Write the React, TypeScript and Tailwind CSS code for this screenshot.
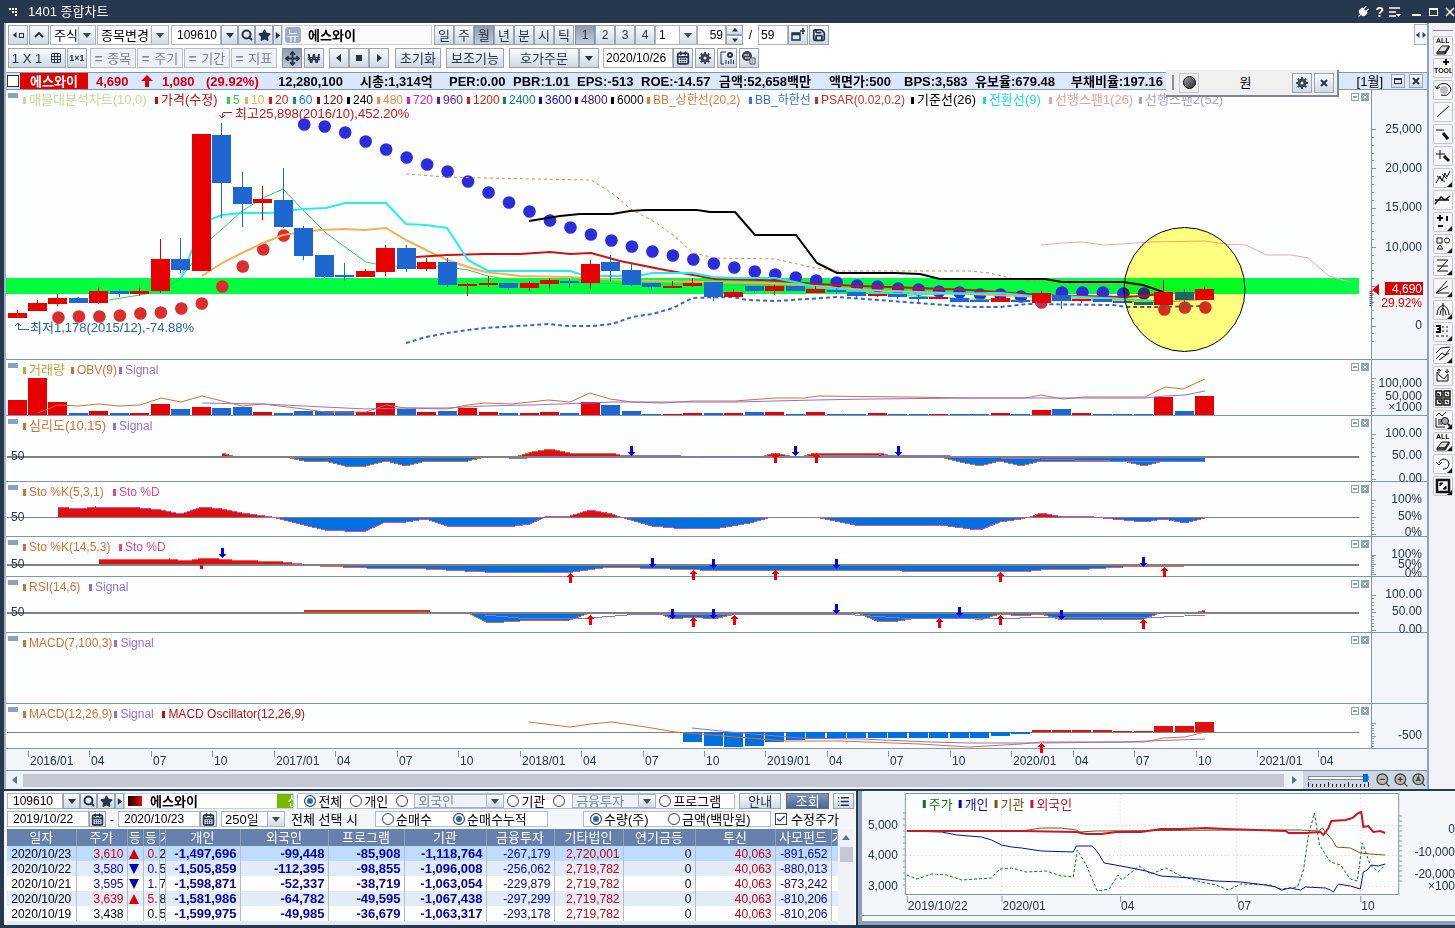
import type { ReactNode } from "react";
import { Search, Star, Settings, Save, CalendarDays, Move, Plug, Grid3x3, List, ZoomIn, ZoomOut, Check } from "lucide-react";
import clsx from "clsx";

type Pt = [number, number];
type Candle = [top: number, bottom: number, high: number, low: number, up: 0 | 1];

const RED = "#e60000";
const BLUE = "#1e66d0";
const AREA_BLUE = "#0070e0";
const ORANGE = "#d07038";
const PURPLE = "#9070d8";
const LINE = "#8294b4";

const font = "font-['Liberation_Sans','Noto_Sans_CJK_KR',sans-serif]";
const btn = "flex items-center justify-center border border-[#98a4b4] bg-linear-to-b from-[#fbfcfd] to-[#cfd8e3] text-[#26324a]";
const pressed = "flex items-center justify-center border border-[#8290a4] bg-linear-to-b from-[#8d9bb0] to-[#c3ccd9] text-[#26324a]";

const barX = (i: number) => 17.5 + 20.48 * i;
const poly = (pts: Pt[]) => pts.map(p => p.join(",")).join(" ");
const isWide = (ch: string) => ch.charCodeAt(0) > 0x1100;
const cells = (s: string) => [...s].reduce((n, ch) => n + (isWide(ch) ? 2 : 1), 0);

const candles: Candle[] = [
  [313, 318, 310, 318, 1], [303, 311, 300, 311, 1], [298, 304, 294, 306, 1], [298, 303, 297, 303, 0],
  [291, 303, 287, 304, 1], [291, 294, 289, 297, 0], [291, 294, 287, 296, 1], [259, 291, 239, 293, 1],
  [259, 270, 238, 273, 0], [134, 271, 134, 271, 1], [135, 183, 123, 218, 0], [187, 204, 172, 227, 0],
  [199, 203, 186, 220, 1], [200, 227, 168, 228, 0], [228, 256, 226, 260, 0], [255, 277, 255, 278, 0],
  [275, 277, 263, 281, 0], [271, 277, 269, 277, 1], [248, 272, 245, 276, 1], [248, 269, 245, 272, 0],
  [262, 269, 258, 271, 1], [262, 285, 258, 287, 0], [284, 286, 283, 296, 1], [283, 285, 276, 287, 1],
  [283, 288, 283, 290, 0], [283, 288, 281, 291, 1], [280, 284, 278, 289, 1], [281, 283, 279, 288, 0],
  [264, 283, 260, 289, 1], [262, 271, 255, 281, 0], [270, 285, 262, 286, 0], [283, 287, 283, 290, 0],
  [286, 288, 281, 288, 1], [283, 286, 278, 287, 1], [282, 297, 282, 301, 0], [292, 297, 289, 297, 1],
  [286, 291, 286, 293, 0], [286, 291, 285, 295, 1], [286, 291, 286, 291, 0], [289, 293, 286, 293, 1],
  [290, 292, 288, 294, 0], [292, 296, 292, 299, 0], [294, 296, 294, 297, 1], [294, 297, 294, 299, 0],
  [297, 299, 295, 303, 0], [297, 299, 297, 299, 1], [298, 302, 298, 302, 0], [300, 302, 300, 302, 0],
  [298, 302, 298, 302, 1], [300, 302, 300, 302, 0], [293, 303, 291, 303, 1], [295, 301, 295, 309, 0],
  [299, 301, 299, 303, 1], [299, 302, 299, 302, 0], [301, 303, 301, 303, 0], [302, 305, 302, 305, 0],
  [292, 305, 280, 305, 1], [292, 300, 289, 303, 0], [289, 300, 287, 300, 1],
];

const volumes = [
  400, 378, 402, 413, 411, 413, 413, 404, 409, 407, 408, 407, 412, 413, 411, 411, 411, 412, 403, 409,
  412, 411, 408, 412, 413, 413, 412, 413, 402, 405, 411, 414, 414, 413, 413, 413, 412, 412, 414, 412,
  414, 414, 413, 414, 414, 414, 414, 414, 413, 414, 410, 409, 413, 414, 414, 414, 397, 411, 396,
];

// parabolic SAR, first value belongs to bar 2
const psar = [
  317, 316, 316, 315, 313, 312, 308, 303, 286, 266, 249, 235, 124, 126, 132, 141, 149, 157, 164, 171,
  181, 192, 202, 211, 220, 227, 234, 240, 246, 251, 255, 259, 263, 267, 271, 274, 277, 280, 282, 285,
  286, 288, 289, 291, 292, 294, 294, 296, 302, 292, 292, 292, 293, 293, 309, 307, 307,
];
const psarUp = (bar: number) => bar < 14 || bar === 50 || bar > 55;

const cyan: Pt[] = [[181, 278], [192, 250], [211, 219], [222, 215], [242, 213], [270, 213], [283, 211], [304, 209], [326, 208], [345, 203], [386, 203], [406, 224], [426, 225], [447, 228], [468, 260], [488, 271], [570, 271], [580, 274], [603, 276], [638, 276], [652, 273], [693, 273], [713, 277], [733, 278], [775, 278], [795, 282], [815, 287], [837, 289], [878, 293], [918, 294], [1000, 293], [1030, 296], [1063, 296], [1103, 298], [1143, 300], [1160, 302]];
const orange: Pt[] = [[202, 276], [222, 263], [242, 253], [263, 243], [283, 235], [304, 232], [320, 230], [345, 229], [365, 230], [386, 228], [406, 240], [426, 250], [447, 260], [468, 267], [485, 272], [520, 276], [568, 277], [588, 278], [622, 280], [652, 281], [705, 282], [768, 283], [808, 285], [837, 288], [868, 290], [970, 294], [1041, 297], [1123, 300], [1164, 302], [1205, 299]];
const green: Pt[] = [[109, 300], [140, 295], [161, 291], [181, 278], [202, 250], [211, 239], [242, 211], [263, 198], [283, 189], [304, 211], [326, 233], [345, 247], [366, 262], [386, 266], [447, 267], [468, 270], [488, 276], [530, 283], [570, 283], [785, 286], [837, 292], [970, 299], [1041, 301], [1100, 300], [1164, 303]];
const red: Pt[] = [[416, 257], [447, 255], [485, 254], [520, 254], [550, 252], [570, 254], [591, 253], [620, 261], [665, 270], [693, 275], [715, 279], [760, 280], [795, 282], [815, 284], [860, 286], [918, 288], [970, 290], [1041, 295], [1082, 296], [1123, 297], [1143, 296], [1160, 294]];
const black: Pt[] = [[529, 221], [560, 216], [580, 214], [612, 214], [630, 211], [645, 210], [697, 210], [710, 212], [735, 212], [755, 235], [796, 235], [817, 263], [837, 273], [895, 273], [920, 274], [940, 279], [1045, 279], [1062, 282], [1123, 282], [1143, 285], [1163, 292]];
const bbUpper: Pt[] = [[406, 174], [447, 177], [485, 178], [591, 180], [612, 193], [632, 210], [655, 222], [673, 235], [693, 253], [715, 258], [775, 259], [815, 268], [837, 271], [970, 271], [990, 273], [1010, 278], [1045, 283], [1105, 285], [1145, 286], [1185, 290], [1205, 289]];
const bbLower: Pt[] = [[406, 343], [426, 337], [447, 333], [468, 330], [485, 328], [518, 326], [548, 324], [567, 326], [593, 326], [612, 324], [632, 317], [652, 314], [673, 308], [692, 298], [732, 297], [748, 300], [775, 301], [808, 299], [838, 297], [878, 300], [918, 303], [970, 307], [1000, 307], [1027, 304], [1113, 305], [1127, 307], [1157, 307], [1205, 306]];
const span1: Pt[] = [[1041, 245], [1062, 243], [1083, 242], [1103, 245], [1123, 244], [1150, 242], [1205, 241], [1225, 244], [1246, 245], [1267, 255], [1291, 255], [1308, 258], [1329, 276], [1350, 282]];

const obv: Pt[] = [[38, 413], [58, 405], [78, 406], [99, 404], [119, 406], [140, 405], [161, 398], [181, 402], [202, 396], [222, 401], [242, 406], [263, 404], [304, 409], [325, 412], [366, 412], [386, 405], [406, 408], [447, 409], [468, 405], [485, 403], [512, 404], [548, 400], [570, 402], [590, 393], [610, 399], [632, 402], [662, 403], [693, 401], [735, 401], [775, 398], [805, 398], [818, 396], [908, 397], [970, 398], [1025, 398], [1041, 395], [1063, 399], [1083, 397], [1145, 397], [1165, 387], [1183, 389], [1205, 379]];
const obvSignal: Pt[] = [[202, 403], [263, 404], [304, 406], [345, 408], [366, 409], [406, 408], [447, 408], [485, 406], [530, 405], [590, 403], [612, 402], [735, 402], [775, 401], [815, 400], [870, 399], [970, 398], [1145, 398], [1165, 396], [1185, 395], [1205, 391]];

const psy: Pt[] = [[222, 453], [236, 457], [285, 457], [304, 461], [325, 461], [345, 466], [366, 466], [386, 461], [406, 466], [426, 461], [468, 461], [485, 457], [515, 457], [532, 452], [550, 449], [570, 453], [612, 453], [628, 457], [760, 457], [775, 453], [795, 457], [800, 457], [815, 453], [880, 453], [895, 457], [940, 457], [960, 462], [980, 466], [1000, 461], [1021, 466], [1041, 461], [1123, 461], [1144, 466], [1164, 461], [1205, 461]];
const psySignal: Pt[] = [[509, 459], [545, 457], [612, 457], [630, 455], [662, 455], [700, 457], [780, 457], [815, 456], [880, 455], [950, 456], [960, 457], [1040, 459], [1110, 461], [1205, 461]];
const stoFast: Pt[] = [[58, 507], [80, 509], [95, 507], [140, 508], [161, 510], [181, 514], [202, 507], [222, 509], [242, 513], [272, 517], [304, 525], [325, 530], [345, 531], [366, 531], [385, 522], [406, 522], [426, 519], [447, 526], [515, 526], [530, 524], [545, 517], [570, 516], [590, 510], [612, 514], [620, 517], [652, 526], [673, 528], [714, 529], [750, 523], [772, 517], [815, 517], [855, 525], [890, 526], [940, 525], [970, 529], [980, 530], [1000, 522], [1021, 519], [1030, 517], [1041, 513], [1058, 516], [1085, 516], [1103, 518], [1144, 522], [1164, 519], [1185, 523], [1205, 518]];
const stoSlow: Pt[] = [[99, 560], [170, 559], [185, 561], [205, 558], [232, 560], [283, 562], [320, 566], [366, 568], [426, 569], [485, 572], [573, 572], [595, 569], [612, 567], [640, 568], [700, 570], [840, 570], [900, 571], [1021, 572], [1041, 570], [1090, 569], [1123, 567], [1185, 566], [1205, 565]];
const rsi: Pt[] = [[304, 611], [386, 611], [430, 612], [468, 613], [488, 623], [520, 621], [570, 620], [590, 613], [660, 614], [673, 619], [693, 617], [713, 619], [732, 615], [740, 613], [860, 614], [877, 621], [898, 621], [918, 618], [970, 618], [980, 620], [1000, 614], [1021, 616], [1041, 614], [1062, 620], [1103, 619], [1144, 619], [1160, 613], [1195, 613], [1205, 610]];
const rsiSignal: Pt[] = [[485, 615], [530, 619], [590, 618], [640, 614], [740, 615], [840, 614], [900, 618], [980, 619], [1060, 617], [1144, 618], [1205, 615]];
const macd: Pt[] = [[529, 722], [570, 727], [590, 724], [612, 722], [652, 728], [675, 732], [785, 741], [840, 741], [920, 744], [970, 747], [1021, 744], [1041, 742], [1144, 742], [1164, 738], [1185, 737], [1205, 732]];
const macdSignal: Pt[] = [[692, 728], [730, 732], [800, 738], [860, 739], [930, 742], [970, 743], [1041, 743], [1123, 742], [1205, 739]];
// oscillator, first value belongs to bar 33
const oscillator = [742, 746, 747, 746, 742, 740, 739, 738, 738, 738, 738, 738, 738, 738, 738, 736, 734, 730, 730, 730, 730, 731, 731, 726, 726, 722];

function Legend({ items }: { items: [string, string][] }) {
  return (
    <div className="absolute left-[17px] top-[2px] flex h-4 items-center whitespace-nowrap">
      {items.map(([label, color]) => (
        <span key={label} className="flex shrink-0 items-center gap-[3px] pr-[2px]" style={{ color, minWidth: cells(label) * 6 + 12 }}>
          <span className="h-[7px] w-[3px] shrink-0" style={{ background: color }} />
          <span className={[...label].some(isWide) && !/[A-Z]/.test(label) ? "text-[13px] leading-4" : "text-xs leading-4"}>{label}</span>
        </span>
      ))}
    </div>
  );
}

function Line({ pts, color, w = 1, dash }: { pts: Pt[]; color: string; w?: number; dash?: string }) {
  return <polyline points={poly(pts)} fill="none" stroke={color} strokeWidth={w} strokeDasharray={dash} />;
}

function BaseLine({ y, label = true, w = 2 }: { y: number; label?: boolean; w?: number }) {
  return (
    <>
      <line x1={7} x2={1359} y1={y} y2={y} stroke="#808080" strokeWidth={w} />
      {label && <text x={11} y={y + 3} fontSize={12} fill="#26324a">50</text>}
    </>
  );
}

function Area({ pts, base, edge }: { pts: Pt[]; base: number; edge: string }) {
  const first = pts[0][0];
  const last = pts[pts.length - 1][0];
  const above = pts.map(([x, y]): Pt => [x, Math.min(y, base)]);
  const below = pts.map(([x, y]): Pt => [x, Math.max(y, base)]);
  return (
    <>
      <polygon points={poly([[first, base], ...above, [last, base]])} fill="#e01010" />
      <polygon points={poly([[first, base], ...below, [last, base]])} fill={AREA_BLUE} />
      <Line pts={pts} color={edge} />
    </>
  );
}

function Arrows({ up = [], down = [] }: { up?: Pt[]; down?: Pt[] }) {
  return (
    <>
      {up.map(([x, y]) => (
        <path key={x} d={`M${x} ${y - 5}l4 4h-2v6h-3v-6h-3z`} fill="#f00000" />
      ))}
      {down.map(([x, y]) => (
        <path key={x} d={`M${x} ${y + 5}l4 -4h-2v-6h-3v6h-3z`} fill="#0000e0" />
      ))}
    </>
  );
}

interface PanelProps {
  top: number;
  height: number;
  h: string;
  legend: [string, string][];
  axis?: [string, number][];
  step?: number;
  from?: number;
  to?: number;
  axisExtra?: ReactNode;
  children?: ReactNode;
}

function Panel({ top, height, h, legend, axis = [], step, from = 0, to = 0, axisExtra, children }: PanelProps) {
  const ticks: number[] = [];
  if (step) for (let y = from; y <= to; y += step) ticks.push(y);
  return (
    <section className={clsx("flex", h)}>
      <div className="relative min-w-0 flex-1">
        <svg className="absolute inset-0 size-full overflow-visible" viewBox={`6 ${top} 1366 ${height}`} preserveAspectRatio="none" shapeRendering="crispEdges">
          <line x1={6} x2={1372} y1={top + height - 0.5} y2={top + height - 0.5} stroke={LINE} />
          {children}
        </svg>
        <div className="absolute left-[2px] top-[3px] h-[5px] w-[10px] bg-[#8fa0bf]" />
        <Legend items={legend} />
        <div className="absolute right-[3px] top-[3px] flex gap-[2px]">
          <button aria-label="최대화" className="flex size-2 items-center justify-center border border-[#8fa0bf] bg-white">
            <span className="h-[2px] w-1 bg-[#8fa0bf]" />
          </button>
          <button aria-label="닫기" className="size-2 bg-[#8fa0bf]">
            <svg viewBox="0 0 8 8" className="size-2"><path d="M2 2l4 4M6 2l-4 4" stroke="#fff" /></svg>
          </button>
        </div>
      </div>
      <svg className="w-[55px] shrink-0 overflow-visible bg-[#f3f6f9]" viewBox={`1372 ${top} 55 ${height}`}>
        <g shapeRendering="crispEdges">
          <line x1={1371.5} x2={1371.5} y1={top} y2={top + height} stroke={LINE} />
          <line x1={1372} x2={1427} y1={top + height - 0.5} y2={top + height - 0.5} stroke={LINE} />
          {ticks.map((y, i) => <line key={y} x1={1372} x2={i % 5 ? 1374 : 1376} y1={y} y2={y} stroke={LINE} />)}
        </g>
        {axis.map(([label, y]) => (
          <text key={label} x={1422} y={y + 4} fontSize={12} textAnchor="end" fill="#26324a">{label}</text>
        ))}
        {axisExtra}
      </svg>
    </section>
  );
}

function Caret({ dir = "down", className = "size-2" }: { dir?: "down" | "up" | "left" | "right"; className?: string }) {
  const d = { down: "M0 2h8l-4 5z", up: "M0 6h8l-4-5z", left: "M6 0v8l-5-4z", right: "M2 0v8l5-4z" }[dir];
  return <svg viewBox="0 0 8 8" className={clsx("shrink-0 fill-current", className)}><path d={d} /></svg>;
}

function Combo({ label, value, w, cap = "w-[17px]", muted = false }: { label: string; value: string; w: string; cap?: string; muted?: boolean }) {
  return (
    <div className={clsx("relative flex h-full shrink-0 border border-[#a9b3c2]", w, muted ? "bg-[#eef1f6] text-[#7d8797]" : "bg-white text-black")}>
      <select aria-label={label} className="h-full min-w-0 flex-1 appearance-none pl-[3px] leading-none outline-none">
        <option>{value}</option>
      </select>
      <span className={clsx("pointer-events-none flex items-center justify-center border-l border-[#a9b3c2] bg-linear-to-b from-white to-[#d3dbe5] text-[#3d4654]", cap)}>
        <Caret />
      </span>
    </div>
  );
}

function CodeBox({ w }: { w: string }) {
  return (
    <div className="flex h-full">
      <input aria-label="종목코드" defaultValue="109610" className={clsx("border border-[#a9b3c2] bg-white pl-[5px] text-xs", w)} />
      <button aria-label="종목 목록" className={clsx(btn, "w-[17px] text-[#3d4654]")}><Caret /></button>
      <button aria-label="종목 검색" className={clsx(btn, "w-[17px] text-[#3d4654]")}><Search size={12} strokeWidth={4} /></button>
      <button aria-label="관심종목" className={clsx(btn, "w-[18px] text-[#3d4654]")}><Star size={13} fill="currentColor" /></button>
      <button aria-label="다음 종목" className={clsx(btn, "w-[9px] text-[#3d4654]")}><Caret dir="right" className="size-[7px]" /></button>
    </div>
  );
}

// solid cog with square teeth
function Cog() {
  return (
    <svg viewBox="0 0 14 14" className="size-[14px]" fill="none" stroke="#3d4654">
      <circle cx="7" cy="7" r="3" strokeWidth="3" />
      <path d="M7 1v2M7 11v2M1 7h2M11 7h2M2.800 2.800l1.400 1.400M9.800 9.800l1.400 1.400M2.800 11.200l1.400-1.400M9.800 4.200l1.400-1.400" strokeWidth="2" />
    </svg>
  );
}

function Toolbar() {
  const periods = ["일", "주", "월", "년", "분", "시", "틱"];
  return (
    <div className="flex h-[49px] flex-col gap-[3px] bg-white pl-[2px] pt-[2px] text-[13px] leading-none">
      <div className="flex h-5 items-stretch">
        <button aria-label="이전" className={clsx(btn, "w-5 gap-[1px]")}><Caret dir="left" className="size-[6px]" /><span className="size-[5px] border border-current" /></button>
        <button aria-label="접기" className={clsx(btn, "ml-[1px] w-5")}>
          <svg viewBox="0 0 10 6" className="h-[6px] w-[10px]"><path d="M1 5l4-4 4 4" fill="none" stroke="currentColor" strokeWidth="2" /></svg>
        </button>
        <div className="ml-[1px] flex"><Combo label="시장" value="주식" w="w-[46px]" /></div>
        <div className="ml-[1px] flex"><Combo label="종목변경" value="종목변경" w="w-[72px]" /></div>
        <div className="ml-[2px]"><CodeBox w="w-[50px]" /></div>
        <div className="flex w-[150px] items-center gap-[7px] border border-[#c9d0da] bg-[#fafbfc] pl-[2px]">
          <button className="size-4 rounded-[3px] bg-[#9fadc4] text-[13px] leading-none text-white">뉴</button>
          <b className="text-[13px]">에스와이</b>
        </div>
        <div className="ml-[2px] flex">
          {periods.map(p => <button key={p} className={clsx(p === "월" ? pressed : btn, "w-5")}>{p}</button>)}
        </div>
        <div className="ml-[1px] flex">
          {["1", "2", "3", "4"].map(n => <button key={n} className={clsx(n === "1" ? pressed : btn, "w-5 text-xs")}>{n}</button>)}
        </div>
        <div className="text-xs"><Combo label="간격" value="1" w="w-[42px]" /></div>
        <div className="flex">
          <input aria-label="표시 봉 수" defaultValue="59" className="w-[29px] border border-[#a9b3c2] pr-[2px] text-right text-xs" />
          <div className="flex w-[17px] flex-col">
            <button aria-label="증가" className={clsx(btn, "h-[10px]")}><Caret dir="up" className="size-[6px]" /></button>
            <button aria-label="감소" className={clsx(btn, "h-[10px]")}><Caret className="size-[6px]" /></button>
          </div>
        </div>
        <span className="w-[15px] self-center text-center text-xs">/</span>
        <input aria-label="전체 봉 수" defaultValue="59" className="w-[30px] border border-[#a9b3c2] pl-[2px] text-xs" />
        <button aria-label="새 창" className={clsx(btn, "w-5")}>
          <svg viewBox="0 0 14 14" className="size-[14px]"><path d="M1 5h8v7h-8zM1 6.500h8M12 0v6M9 3h5" fill="none" stroke="currentColor" strokeWidth="1.500" /></svg>
        </button>
        <button aria-label="저장" className={clsx(btn, "ml-[1px] w-5")}><Save size={14} strokeWidth={3} /></button>
      </div>
      <div className="flex h-5 items-stretch">
        <button className={clsx(btn, "w-[58px] gap-2")}>1 X 1 <Grid3x3 size={12} /></button>
        <button className={clsx(btn, "ml-[1px] w-5 text-[9px] font-bold")}>1×1</button>
        <div className="ml-[3px] flex gap-[1px]">
          {["종목", "주기", "기간", "지표"].map(s => (
            <button key={s} className="flex w-[46px] items-center justify-center gap-[5px] border border-[#b4bdca] bg-[#eef1f5] text-[#76839a]">
              <b>=</b>{s}
            </button>
          ))}
        </div>
        <button aria-label="십자선" className={clsx(pressed, "ml-[5px] w-5")}><Move size={15} strokeWidth={3} /></button>
        <button aria-label="원화" className={clsx(btn, "ml-[2px] w-5 font-bold")}>₩</button>
        <div className="ml-[5px] flex">
          <button aria-label="뒤로" className={clsx(btn, "w-5")}><Caret dir="left" /></button>
          <button aria-label="정지" className={clsx(btn, "w-5")}><span className="size-[6px] bg-current" /></button>
          <button aria-label="앞으로" className={clsx(btn, "w-5")}><Caret dir="right" /></button>
        </div>
        <button className={clsx(btn, "ml-[6px] w-[46px]")}>초기화</button>
        <button className={clsx(btn, "ml-[5px] w-[58px]")}>보조기능</button>
        <button className={clsx(btn, "ml-[5px] w-[70px]")}>호가주문</button>
        <button aria-label="주문 목록" className={clsx(btn, "w-5")}><Caret /></button>
        <input aria-label="기준일" defaultValue="2020/10/26" className="ml-1 w-[70px] border border-[#a9b3c2] pl-[2px] text-xs" />
        <button aria-label="달력" className={clsx(btn, "w-5")}><CalendarDays size={14} strokeWidth={3} /></button>
        <button aria-label="설정" className={clsx(btn, "ml-[2px] w-5")}><Cog /></button>
        <button aria-label="차트 설정" className={clsx(btn, "ml-[2px] w-5")}>
          <svg viewBox="0 0 14 14" className="size-[14px]" fill="none" stroke="currentColor"><path d="M1 1h5M1 1v12h3M6 13V9M8.500 13v-3M11 13V8M13.500 13V9" /><circle cx="10" cy="4" r="2" strokeWidth="2" /></svg>
        </button>
        <button aria-label="종목 교체" className={clsx(btn, "ml-[2px] w-5")}>
          <svg viewBox="0 0 14 14" className="size-[14px]"><circle cx="5" cy="5" r="5" fill="#3d4654" /><path d="M2 4h5M3 7h5" stroke="#fff" /><path d="M8 7h5v6h-5zM9.500 9h2M9.500 11h2" fill="#fff" stroke="#3d4654" /></svg>
        </button>
      </div>
    </div>
  );
}

const facts = ["시총:1,314억", "PER:0.00", "PBR:1.01", "EPS:-513", "ROE:-14.57", "금액:52,658백만", "액면가:500", "BPS:3,583", "유보율:679.48", "부채비율:197.16"];

function InfoBar() {
  return (
    <div className="relative flex h-[18px] items-center border-y border-[#8294b4] bg-[#dde7fc] text-[13px] font-bold leading-none">
      <input type="checkbox" aria-label="종목 선택" className="ml-[1px] size-3 shrink-0 appearance-none border border-[#26324a] bg-white" />
      <span className="ml-[1px] flex h-full w-[68px] shrink-0 items-center justify-center bg-[#e00000] text-white">에스와이</span>
      <div className="ml-2 flex shrink-0 items-center text-[#d00010]">
        <span className="w-[45px]">4,690</span>
        <svg viewBox="0 0 12 12" className="mr-[9px] size-3 fill-current"><path d="M6 0l6 6h-4v6h-4v-6h-4z" /></svg>
        <span className="w-11">1,080</span>
        <span className="w-[72px]">(29.92%)</span>
      </div>
      <span className="w-[82px] shrink-0">12,280,100</span>
      <div className="flex w-[806px] overflow-hidden whitespace-nowrap">
        {facts.map(f => <span key={f} className="shrink-0" style={{ width: cells(f) * 7 + 8 - (isWide(f[0]) ? 3 : 0) }}>{f}</span>)}
      </div>
      <div className="ml-auto flex items-center gap-1 pr-1 font-normal">
        <span className="mr-1 text-[13px]">[1월]</span>
        <button aria-label="창 최대화" className={clsx(btn, "size-[14px]")}><span className="h-[6px] w-2 border border-t-2 border-current" /></button>
        <button aria-label="창 닫기" className={clsx(btn, "size-[14px]")}><svg viewBox="0 0 8 8" className="size-2"><path d="M1 1l6 6M7 1l-6 6" stroke="currentColor" strokeWidth="2" /></svg></button>
      </div>
      {/* floating drawing-tool bar */}
      <div className="absolute -top-[3px] right-[88px] z-10 flex h-[27px] w-[173px] items-center border-b-2 border-r-2 border-[#7d8590] bg-[#f0f0f0] font-normal">
        <span className="ml-[6px] h-[15px] w-[2px] bg-[#8a8f98]" />
        <button aria-label="도형 색" className="ml-[5px] flex size-5 items-center justify-center border border-[#c5c8cd]">
          <span className="size-[13px] rounded-full border border-black bg-linear-to-br from-[#a0a0a0] to-[#303030]" />
        </button>
        <span className="flex-1 text-center">원</span>
        <button aria-label="도형 설정" className={clsx(btn, "size-5")}><Cog /></button>
        <button aria-label="도형 닫기" className={clsx(btn, "ml-[2px] mr-[3px] size-5")}><svg viewBox="0 0 8 8" className="size-2"><path d="M1 1l6 6M7 1l-6 6" stroke="currentColor" strokeWidth="2" /></svg></button>
      </div>
    </div>
  );
}

function PriceChart() {
  return (
    <>
      <rect x={6} y={278} width={1353} height={16} fill="#00ff40" />
      <g shapeRendering="auto">
        {psar.map((y, i) => (
          <circle key={i} cx={barX(i + 2)} cy={y + 0.5} r={6.3} fill={psarUp(i + 2) ? "#dc2c2c" : "#2c2cdc"} />
        ))}
        <Line pts={bbUpper} color="#e08050" dash="3 3" />
        <Line pts={bbLower} color="#4060d8" w={2} dash="4 3" />
        <Line pts={green} color="#30d060" />
        <Line pts={orange} color="#f4b054" w={2} />
        <Line pts={red} color="#c81414" w={2} />
        <Line pts={cyan} color="#24ecf0" w={2} />
        <Line pts={black} color="#000" w={2} />
        <Line pts={span1} color="#f0a8a8" />
      </g>
      {candles.map(([top, bottom, high, low, up], i) => {
        const x = Math.round(barX(i));
        return (
          <g key={i} fill={up ? RED : BLUE}>
            <rect x={x - 10} y={top} width={19} height={bottom - top} />
            <rect x={x - 1} y={high} width={1} height={low - high} />
          </g>
        );
      })}
      <ellipse cx={1184.5} cy={289.5} rx={60.5} ry={62} fill="#ffff80" stroke="#000" shapeRendering="auto" className="mix-blend-multiply" />
      <path d="M232 112h-7q-3 0-3 5M219 115l3 3 3-3" fill="none" stroke="#c01818" />
      <text x={235} y={118} fontSize={13} fill="#c01818">최고25,898(2016/10),452.20%</text>
      <path d="M29 329h-11v-6M15 326l3-3 3 3" fill="none" stroke="#2860b8" />
      <text x={30} y={332} fontSize={13} fill="#2860b8">최저1,178(2015/12),-74.88%</text>
    </>
  );
}

const priceLegend: [string, string][] = [
  ["매물대분석차트(10,0)", "#c8d898"], ["가격(수정)", "#c01010"], ["5", "#30d050"], ["10", "#f0b050"], ["20", "#d81818"],
  ["60", "#1878d8"], ["120", "#701010"], ["240", "#000000"], ["480", "#f08850"], ["720", "#d818d8"], ["960", "#5818d0"],
  ["1200", "#d81818"], ["2400", "#108070"], ["3600", "#0808c8"], ["4800", "#401070"], ["6000", "#000000"],
  ["BB_상한선(20,2)", "#e87838"], ["BB_하한선", "#3870d8"], ["PSAR(0.02,0.2)", "#c83030"], ["기준선(26)", "#000000"],
  ["전환선(9)", "#20d8e0"], ["선행스팬1(26)", "#e8a0a0"], ["선행스팬2(52)", "#a8a0d0"],
];
const sig: [string, string] = ["Signal", PURPLE];

function TimeAxis() {
  const months = ["01", "04", "07", "10"];
  return (
    <div className="h-[22px] border-b border-[#8294b4] bg-[#f3f6f9]">
      <svg className="h-[21px] w-full" viewBox="6 748 1421 21" preserveAspectRatio="none">
        {Array.from({ length: 22 }, (_, i) => {
          const x = Math.round(28 + 61.45 * i);
          const m = months[i % 4];
          return (
            <g key={i}>
              <line x1={x + 0.5} x2={x + 0.5} y1={750} y2={756} stroke={LINE} />
              <text x={x + 2} y={764} fontSize={12} fill="#26324a">{i % 4 ? m : `${2016 + i / 4}/${m}`}</text>
            </g>
          );
        })}
      </svg>
    </div>
  );
}

const tick = <path d="M19 19v-5l-5 5z" fill="#111" stroke="none" />;
const eraser = <><text x="3" y="7" fontSize="7" fontWeight="bold" fill="#111" stroke="none">ALL</text><path d="M4 16l5-6h7l-4 6z" fill="#ddd" /><path d="M4 16h8v2h-8zM12 16l4-6v2l-4 6z" fill="#888" /></>;
const tools: [string, ReactNode][] = [
  ["모두 지우기", eraser],
  ["도구", <><path d="M13 1v6M10 4h6" strokeWidth="2" /><text x="1" y="15" fontSize="7" fontWeight="bold" fill="#111" stroke="none">TOOL</text></>],
  ["되돌리기", <><circle cx="11" cy="10" r="4" fill="#bbb" stroke="none" /><path d="M4 8a7 6 0 1 1 4 7M2 6l2 3 3-2" /></>],
  ["추세선", <path d="M4 15L16 4" />],
  ["수평선", <><path d="M3 6h8" /><path d="M10 9l5 6" strokeWidth="3" /></>],
  ["십자 표시", <><path d="M3 8h9M7 4v9" /><path d="M11 10l5 5" strokeWidth="3" /></>],
  ["파동", <><path d="M3 15L7 8l2 5 3-8 2 4 3-6M4 8l8 6M9 6l5 5" />{tick}</>],
  ["꺾은선", <path d="M2 14l6-7 4 3 5-4M2 10h14" strokeWidth="1.500" />],
  ["가감", <><path d="M4 6h6M7 3v6M14 4v5M5 14h5" strokeWidth="2" />{tick}</>],
  ["도형", <><path d="M4 4h5v5H4zM4 15l3-4 3 4z" /><circle cx="14" cy="6.500" r="2.500" />{tick}</>],
  ["구간", <><path d="M4 4h11M4 15h11M4 10h11M15 4L5 15" />{tick}</>],
  ["팬", <><path d="M3 15L14 3M3 15l12-7M3 15h13" />{tick}</>],
  ["갈퀴", <><path d="M10 3v13M4 15q0-7 6-10 6 3 6 10M7 15q0-5 3-7 3 2 3 7" />{tick}</>],
  ["되돌림", <><path d="M3 4h4v3H4h3v3H3" strokeWidth="2" /><path d="M9 5h2M13 5h2M9 9h2M13 9h2M3 14h3M8 14h3M13 14h2" />{tick}</>],
  ["채널", <><path d="M3 15l6-6 3 2 5-6M3 9l5-5 9-1M6 16l10-7" />{tick}</>],
  ["패턴", <path d="M4 15V6l3 4 4 3 4-5v7zM6 3v4M14 3v3M4 5l2-2 2 2M12 5l2 2 2-2" />],
  ["문자표", <path d="M3 3h6v6H3zM11 3h6v6h-6zM3 11h6v6H3zM11 11h6v6h-6zM5 5v2h2M13 5l2 2M5 13h2v2M13 13l2 2" strokeWidth="1.500" />],
  ["검색", <><path d="M3 6l3-3 3 3 4-4M3 8v9h9M5 10h4M5 12h3M5 14h4" /><circle cx="12" cy="11" r="3.500" fill="#aaa" /><path d="M15 14l2 2" strokeWidth="2" />{tick}</>],
  ["전체 삭제", <>{eraser}{tick}</>],
  ["실행 취소", <><path d="M6 9a5 5 0 1 1 4 6M3 8l3 3 3-3" />{tick}</>],
  ["확대", <><path d="M4 4h12v12H4z" strokeWidth="2.500" /><path d="M7 7h3L7 10zM13 13h-3l3-3z" fill="#111" />{tick}</>],
];

function SideTools() {
  return (
    <aside className="w-[28px] shrink-0 border-l-2 border-[#8ea0c4] bg-[#f1f3f8] pl-[4px] pt-[7px]">
      <div className="mb-[5px] h-px w-5 bg-[#8a8f98]" />
      <div className="flex flex-col gap-[2px]">
        {tools.map(([name, icon]) => (
          <button key={name} aria-label={name} className="size-5 rounded-[2px] border border-[#c2c6ce] bg-[#f6f7f9]">
            <svg viewBox="1 1 18 18" className="size-[18px]" fill="none" stroke="#111">{icon}</svg>
          </button>
        ))}
      </div>
    </aside>
  );
}

function ScrollRow() {
  return (
    <div className="flex h-[18px] items-center bg-[#eef1f6]">
      <button aria-label="왼쪽으로" className="flex w-[17px] justify-center text-[#5c7090]"><Caret dir="left" /></button>
      <div className="h-[13px] flex-1 bg-[#c3c8d3]" />
      <button aria-label="오른쪽으로" className="flex w-[19px] justify-center text-[#5c7090]"><Caret dir="right" /></button>
      <div className="flex h-full w-[124px] items-center gap-[2px] bg-[#cdd6e2] pl-[5px]">
        <div className="flex w-[62px] flex-col">
          <input
            type="range"
            aria-label="확대 비율"
            defaultValue={100}
            className="h-2 w-full appearance-none bg-transparent [&::-webkit-slider-runnable-track]:h-1 [&::-webkit-slider-runnable-track]:border [&::-webkit-slider-runnable-track]:border-[#7c8798] [&::-webkit-slider-runnable-track]:bg-white [&::-webkit-slider-thumb]:-mt-[3px] [&::-webkit-slider-thumb]:h-2 [&::-webkit-slider-thumb]:w-[5px] [&::-webkit-slider-thumb]:appearance-none [&::-webkit-slider-thumb]:bg-[#0070d8]"
          />
          <svg viewBox="0 0 62 5" className="h-[5px] w-full" shapeRendering="crispEdges">
            {Array.from({ length: 16 }, (_, i) => <line key={i} x1={1 + i * 4} x2={1 + i * 4} y1={i % 5 ? 2 : 0} y2={5} stroke="#111" />)}
          </svg>
        </div>
        <button aria-label="축소" className="ml-1 text-[#444]"><ZoomOut size={16} fill="#b8b8b8" /></button>
        <button aria-label="확대" className="text-[#444]"><ZoomIn size={16} fill="#b8b8b8" /></button>
        <button aria-label="자동" className="text-[#444]">
          <svg viewBox="0 0 24 24" className="size-4" fill="none" stroke="currentColor" strokeWidth="2"><circle cx="11" cy="11" r="8" fill="#b8b8b8" /><path d="M21 21l-4.300-4.300M8 14l3-7 3 7M9 12h4" /></svg>
        </button>
      </div>
    </div>
  );
}

function Radio({ name, label, checked, hideLabel, w }: { name: string; label: string; checked?: boolean; hideLabel?: boolean; w: string }) {
  return (
    <label className={clsx("flex shrink-0 items-center gap-[2px] whitespace-nowrap", w)}>
      <input
        type="radio"
        name={name}
        defaultChecked={checked}
        aria-label={label}
        className="size-3 shrink-0 appearance-none rounded-full border border-[#33445e] bg-white checked:bg-[#2a6aa8] checked:shadow-[inset_0_0_0_2px_white]"
      />
      {!hideLabel && label}
    </label>
  );
}

const columns: [string, string][] = [
  ["일자", "w-[69px]"], ["주가", "w-[51px]"], ["등", "w-4"], ["등", "w-4"], ["기", "w-[6px]"], ["개인", "w-[75px]"],
  ["외국인", "w-[88px]"], ["프로그램", "w-[76px]"], ["기관", "w-[82px]"], ["금융투자", "w-[68px]"], ["기타법인", "w-[69px]"],
  ["연기금등", "w-[72px]"], ["투신", "w-[80px]"], ["사모펀드", "w-14"], ["기", ""],
];

const rows: [string, string, number, string, string, string[]][] = [
  ["2020/10/23", "3,610", 1, "0.", "2", ["-1,497,696", "-99,448", "-85,908", "-1,118,764", "-267,179", "2,720,001", "0", "40,063", "-891,652"]],
  ["2020/10/22", "3,580", -1, "0.", "5", ["-1,505,859", "-112,395", "-98,855", "-1,096,008", "-256,062", "2,719,782", "0", "40,063", "-880,013"]],
  ["2020/10/21", "3,595", -1, "1.", "7", ["-1,598,871", "-52,337", "-38,719", "-1,063,054", "-229,879", "2,719,782", "0", "40,063", "-873,242"]],
  ["2020/10/20", "3,639", 1, "5.", "8", ["-1,581,986", "-64,782", "-49,595", "-1,067,438", "-297,299", "2,719,782", "0", "40,063", "-810,206"]],
  ["2020/10/19", "3,438", 0, "0.", "5", ["-1,599,975", "-49,985", "-36,679", "-1,063,317", "-293,178", "2,719,782", "0", "40,063", "-810,206"]],
];
const rowBg = ["bg-[#bfdcff]", "bg-[#e3ebf8]", "bg-white", "bg-[#e3ebf8]", "bg-white"];

function InvestorTable() {
  return (
    <div className="flex h-24 overflow-hidden">
      <div className="min-w-0 flex-1 overflow-hidden">
        <table className="w-full table-fixed border-collapse text-xs leading-none">
          <thead>
            <tr className="h-[17px] bg-[#6880ac] text-[13px] text-white">
              {columns.map(([name, w], i) => <th key={i} className={clsx("overflow-hidden whitespace-nowrap border-r border-[#8f9fbd] p-0 font-normal", w)}>{name}</th>)}
            </tr>
          </thead>
          <tbody>
            {rows.map(([date, price, dir, rate, extra, values], r) => {
              const tone = dir > 0 ? "text-[#d00010]" : dir < 0 ? "text-[#0000b0]" : "text-black";
              const cell = "overflow-hidden whitespace-nowrap border-r border-[#b4bfce] p-0";
              return (
                <tr key={date} className={clsx("h-[15px]", rowBg[r])}>
                  <td className={clsx(cell, "text-center")}>{date}</td>
                  <td className={clsx(cell, "pr-[3px] text-right", tone)}>{price}</td>
                  <td className={clsx(cell, "pl-[1px]", tone)}>
                    {dir !== 0 && <svg viewBox="0 0 10 10" className="size-[10px] fill-current"><path d={dir > 0 ? "M0 10h10L5 0z" : "M0 0h10L5 10z"} /></svg>}
                  </td>
                  <td className={clsx(cell, "pl-1", tone)}>{rate}</td>
                  <td className={cell}>{extra}</td>
                  {values.map((v, i) => (
                    <td
                      key={i}
                      className={clsx(cell, "pr-[3px] text-right", i < 4 && "text-[13px] font-bold", v === "0" ? "text-black" : v[0] === "-" ? "text-[#0000a0]" : "text-[#c00010]")}
                    >
                      {v}
                    </td>
                  ))}
                  <td />
                </tr>
              );
            })}
            <tr className="h-[15px] bg-[#e3ebf8]"><td colSpan={15} /></tr>
          </tbody>
        </table>
      </div>
      <div className="flex w-4 shrink-0 flex-col items-center bg-[#eef1f5]">
        <button aria-label="위로" className="flex h-[18px] items-center text-[#5c7090]"><Caret dir="up" /></button>
        <div className="h-[15px] w-[13px] bg-[#c3c8d3]" />
      </div>
    </div>
  );
}

function InvestorPane() {
  return (
    <section className="flex w-[852px] shrink-0 flex-col gap-[2px] overflow-hidden bg-[#f4f7fa] pl-[3px] pr-[2px] pt-[2px] text-[13px] leading-none">
      <div className="flex h-4 shrink-0 items-stretch">
        <CodeBox w="w-14" />
        <div className="flex w-[171px] items-center border border-[#c9d0da] bg-white pl-[3px]">
          <span className="h-[10px] w-[14px] bg-linear-to-r from-[#200000] to-[#e81010]" />
          <b className="ml-2 flex-1">에스와이</b>
          <span className="h-full w-4 overflow-hidden whitespace-nowrap bg-[#78b800] pl-[10px] text-white">신</span>
        </div>
        <div className="ml-[3px] flex w-[438px] shrink-0 items-center border border-[#b4bdca] bg-white pl-[6px]">
          <Radio name="who" label="전체" checked w="w-[46px]" />
          <Radio name="who" label="개인" w="w-[46px]" />
          <Radio name="who" label="외국인" hideLabel w="w-[18px]" />
          <Combo label="외국인" value="외국인" w="w-[90px]" muted />
          <div className="ml-[3px] flex"><Radio name="who" label="기관" w="w-[46px]" /></div>
          <Radio name="who" label="금융투자" hideLabel w="w-[19px]" />
          <Combo label="기관" value="금융투자" w="w-[84px]" muted />
          <div className="ml-[3px] flex"><Radio name="who" label="프로그램" w="w-[70px]" /></div>
        </div>
        <button className={clsx(btn, "ml-1 w-[42px]")}>안내</button>
        <button className="ml-[5px] w-[43px] border border-[#5a6f94] bg-linear-to-b from-[#8296ba] to-[#4f6690] text-white">조회</button>
        <button aria-label="목록" className={clsx(btn, "ml-[4px] w-[21px]")}><List size={13} strokeWidth={3} /></button>
      </div>
      <div className="flex h-4 shrink-0 items-stretch">
        <input aria-label="시작일" defaultValue="2019/10/22" className="w-[82px] border border-[#a9b3c2] bg-white pl-[5px] text-xs" />
        <button aria-label="시작일 달력" className={clsx(btn, "w-[17px]")}><CalendarDays size={13} strokeWidth={3} /></button>
        <span className="w-3 self-center text-center">-</span>
        <input aria-label="종료일" defaultValue="2020/10/23" className="w-[82px] border border-[#a9b3c2] bg-white pl-[5px] text-xs" />
        <button aria-label="종료일 달력" className={clsx(btn, "w-[17px]")}><CalendarDays size={13} strokeWidth={3} /></button>
        <div className="ml-1"><Combo label="기간" value="250일" w="w-16" /></div>
        <span className="ml-[6px] w-[84px] self-center whitespace-nowrap">전체 선택 시</span>
        <div className="flex w-[173px] shrink-0 items-center border border-[#b4bdca] bg-white pl-[6px]">
          <Radio name="net" label="순매수" w="w-[71px]" />
          <Radio name="net" label="순매수누적" checked w="w-[90px]" />
        </div>
        <div className="ml-[35px] flex w-[188px] shrink-0 items-center border border-[#b4bdca] bg-white pl-[6px]">
          <Radio name="unit" label="수량(주)" checked w="w-[78px]" />
          <Radio name="unit" label="금액(백만원)" w="w-[100px]" />
        </div>
        <label className="ml-1 flex items-center gap-1 whitespace-nowrap">
          <span className="relative flex size-3 items-center justify-center">
            <input type="checkbox" defaultChecked className="size-3 appearance-none border border-[#33445e] bg-white" />
            <Check size={10} strokeWidth={3} className="pointer-events-none absolute text-[#26508a]" />
          </span>
          수정주가
        </label>
      </div>
      <InvestorTable />
    </section>
  );
}

const flowRed: Pt[] = [[905, 831], [1020, 831], [1075, 832], [1085, 834], [1100, 834], [1115, 832], [1140, 832], [1160, 829], [1180, 829], [1205, 828], [1225, 829], [1285, 831], [1288, 833], [1305, 833], [1320, 832], [1323, 835], [1328, 828], [1331, 821], [1345, 820], [1352, 818], [1358, 813], [1361, 812], [1363, 827], [1368, 826], [1373, 832], [1380, 831], [1385, 833]];
const flowBrown: Pt[] = [[905, 831], [1020, 831], [1040, 828], [1060, 828], [1075, 830], [1078, 832], [1095, 831], [1240, 830], [1300, 830], [1318, 831], [1322, 828], [1325, 832], [1332, 840], [1336, 847], [1350, 848], [1360, 853], [1370, 854], [1385, 855]];
const flowBlue: Pt[] = [[905, 831], [940, 832], [955, 835], [980, 837], [990, 840], [1000, 845], [1010, 847], [1020, 848], [1040, 851], [1072, 852], [1075, 846], [1091, 846], [1097, 853], [1103, 863], [1120, 866], [1130, 868], [1145, 871], [1160, 876], [1190, 878], [1215, 881], [1240, 882], [1265, 885], [1275, 887], [1281, 890], [1290, 888], [1300, 890], [1305, 887], [1325, 888], [1330, 890], [1333, 892], [1338, 884], [1350, 886], [1360, 889], [1363, 872], [1367, 870], [1371, 865], [1378, 866], [1385, 864]];
const flowGreen: Pt[] = [[905, 875], [915, 879], [930, 874], [945, 875], [960, 880], [990, 878], [998, 869], [1010, 868], [1025, 872], [1045, 871], [1060, 876], [1072, 877], [1076, 850], [1085, 865], [1096, 891], [1108, 889], [1117, 875], [1121, 880], [1128, 874], [1138, 866], [1150, 874], [1165, 868], [1180, 876], [1200, 882], [1215, 885], [1228, 890], [1240, 884], [1270, 885], [1280, 889], [1297, 887], [1303, 870], [1308, 835], [1314, 813], [1319, 845], [1330, 862], [1340, 865], [1350, 879], [1357, 881], [1362, 843], [1370, 865], [1378, 872], [1385, 865]];

function FlowPane() {
  const xTicks: [number, string][] = [[905, "2019/10/22"], [1000, "2020/01"], [1119, "04"], [1236, "07"], [1360, "10"]];
  const left: [string, number][] = [["5,000", 825], ["4,000", 855], ["3,000", 886]];
  const right: [string, number][] = [["0", 829], ["-10,000", 852], ["-20,000", 874], ["×100", 886]];
  return (
    <section className="min-w-0 flex-1 border-l-4 border-b-4 border-[#8f9fba] bg-[#f4f7fa]">
      <svg className="h-[130px] w-full" viewBox="860 791 595 130" preserveAspectRatio="none">
        <g shapeRendering="crispEdges">
          <rect x={903.5} y={793.5} width={495} height={101} fill="#fdfffe" stroke={LINE} />
          {left.map(([t, y]) => <line key={t} x1={904} x2={1398} y1={y + 0.5} y2={y + 0.5} stroke="#cdd4de" strokeDasharray="1 3" />)}
          {xTicks.slice(1).map(([x]) => <line key={x} x1={x} x2={x} y1={794} y2={894} stroke="#cdd4de" strokeDasharray="1 3" />)}
          {Array.from({ length: 13 }, (_, i) => <line key={i} x1={901} x2={903} y1={813 + i * 6} y2={813 + i * 6} stroke={LINE} />)}
          {Array.from({ length: 14 }, (_, i) => <line key={i} x1={1399} x2={1402} y1={816 + i * 5} y2={816 + i * 5} stroke={LINE} />)}
          <line x1={860} x2={1455} y1={915.5} y2={915.5} stroke={LINE} />
        </g>
        <Line pts={flowGreen} color="#107020" dash="3 2" />
        <Line pts={flowBlue} color="#0808a8" />
        <Line pts={flowBrown} color="#805018" />
        <Line pts={flowRed} color="#c81828" w={2} />
        {xTicks.map(([x, t]) => (
          <g key={t} fill="#26324a">
            <line x1={x + 0.5} x2={x + 0.5} y1={896} y2={902} stroke={LINE} />
            <text x={x + 1} y={910} fontSize={12}>{t}</text>
          </g>
        ))}
        {left.map(([t, y]) => <text key={t} x={896} y={y + 4} fontSize={12} textAnchor="end" fill="#26324a">{t}</text>)}
        {right.map(([t, y]) => <text key={t} x={1455} y={y + 4} fontSize={12} textAnchor="end" fill="#26324a">{t}</text>)}
        {[["주가", "#107020"], ["개인", "#0808a8"], ["기관", "#805018"], ["외국인", "#c81828"]].map(([t, c], i) => (
          <g key={t} fill={c}>
            <rect x={921 + i * 36} y={800} width={3} height={8} />
            <text x={927 + i * 36} y={809} fontSize={13}>{t}</text>
          </g>
        ))}
      </svg>
    </section>
  );
}

export default function App() {
  return (
    <div className={clsx("flex min-h-screen flex-col overflow-hidden bg-[#27374e]", font)}>
      <header className="flex h-[23px] items-center px-2 text-white">
        <svg viewBox="0 0 10 10" className="size-[10px] fill-white"><path d="M1 1h2v2h-2zM4 1h2v2h-2zM7 1h2v2h-2zM4 4h2v2h-2zM7 4h2v2h-2zM7 7h2v2h-2z" /></svg>
        <h1 className="ml-[10px] text-[13px] leading-none">1401 종합차트</h1>
        <div className="-mr-2 ml-auto flex items-center gap-[5px]">
          <button aria-label="연결"><Plug size={14} className="rotate-45" fill="currentColor" /></button>
          <button className="text-sm font-bold leading-none">?</button>
          <button aria-label="메뉴"><svg viewBox="0 0 12 12" className="size-3"><path d="M0 2h11M0 6h7M0 10h7" stroke="#fff" strokeWidth="1.500" /><path d="M7 8h5l-2.500 3z" fill="#fff" /></svg></button>
          <button aria-label="최소화" className="ml-[6px] mt-[6px] h-[2px] w-[9px] bg-white" />
          <button aria-label="최대화" className="ml-[3px] h-2 w-[9px] border border-t-2 border-white" />
          <button aria-label="닫기" className="ml-[2px]"><svg viewBox="0 0 10 10" className="size-[10px]"><path d="M1 1l8 8M9 1l-8 8" stroke="#fff" strokeWidth="1.500" /></svg></button>
        </div>
      </header>

      <div className="flex pl-1">
        <main className="relative min-w-0 flex-1 border-l-2 border-[#a3b2c8] bg-[#fdfffe]">
          <Toolbar />
          <button aria-label="도구 접기" className="absolute right-0 top-[1px] flex h-[21px] w-[13px] items-center justify-center border border-r-0 border-[#a9b3c2] bg-[#f4f7fa] text-[#3d4654]">
            <Caret dir="left" className="size-[6px]" /><Caret dir="right" className="size-[6px]" />
          </button>
          <InfoBar />
          <Panel
            top={90} height={270} h="h-[270px]" legend={priceLegend} from={129.5} to={345} step={7.86}
            axis={[["25,000", 129], ["20,000", 168], ["15,000", 207], ["10,000", 247], ["0", 325]]}
            axisExtra={
              <>
                <rect x={1385} y={282} width={38} height={13} fill="#d80000" />
                <text x={1422} y={293} fontSize={12} textAnchor="end" fill="#fff">4,690</text>
                <text x={1422} y={307} fontSize={12} textAnchor="end" fill="#d80000">29.92%</text>
                <path d="M1379 284v11l-7-5z" fill="#d80000" />
                <path d="M1371 291v8" stroke="#902030" strokeWidth={3} strokeDasharray="1 1" />
                <path d="M1371 299v8" stroke={BLUE} strokeWidth={3} strokeDasharray="1 1" />
              </>
            }
          >
            <PriceChart />
          </Panel>
          <Panel
            top={360} height={56} h="h-14" legend={[["거래량", "#b8a840"], ["OBV(9)", ORANGE], sig]}
            axis={[["100,000", 383], ["50,000", 396], ["×1000", 407]]} from={378} to={412} step={3}
          >
            {volumes.map((y, i) => <rect key={i} x={Math.round(barX(i)) - 10} y={y} width={19} height={415 - y} fill={candles[i][4] ? RED : BLUE} />)}
            <g shapeRendering="auto">
              <Line pts={obv} color={ORANGE} />
              <Line pts={obvSignal} color={PURPLE} />
            </g>
          </Panel>
          <Panel
            top={416} height={66} h="h-[66px]" legend={[["심리도(10,15)", ORANGE], sig]}
            axis={[["100.00", 433], ["50.00", 455], ["0.00", 478]]} from={434} to={480} step={4.5}
          >
            <Area pts={psy} base={457} edge={ORANGE} />
            <BaseLine y={457} />
            <Line pts={psySignal} color={PURPLE} />
            <Arrows down={[[631, 451], [795, 451], [898, 451]]} up={[[775, 458], [816, 458]]} />
          </Panel>
          <Panel
            top={482} height={55} h="h-[55px]" legend={[["Sto %K(5,3,1)", ORANGE], ["Sto %D", "#e04888"]]}
            axis={[["100%", 499], ["50%", 516], ["0%", 532]]} from={500} to={536} step={3.4}
          >
            <Area pts={stoFast} base={517} edge="#d050a0" />
            <BaseLine y={517.5} w={1} />
          </Panel>
          <Panel
            top={537} height={40} h="h-10" legend={[["Sto %K(14,5,3)", ORANGE], ["Sto %D", "#e04888"]]}
            axis={[["100%", 554], ["50%", 564], ["0%", 573]]} from={555} to={575} step={1.9}
          >
            <Area pts={stoSlow} base={565} edge="#e86060" />
            <BaseLine y={565} />
            <rect x={200} y={565} width={3} height={4} fill="#f00000" />
            <Arrows down={[[222, 553], [652, 563], [713, 564], [836, 564], [1143, 562]]} up={[[570, 578], [693, 575], [775, 575], [1000, 577], [1164, 572]]} />
          </Panel>
          <Panel
            top={577} height={56} h="h-14" legend={[["RSI(14,6)", ORANGE], sig]}
            axis={[["100.00", 594], ["50.00", 611], ["0.00", 629]]} from={595} to={631} step={3.5}
          >
            <Area pts={rsi} base={613} edge={ORANGE} />
            <BaseLine y={613} />
            <Line pts={[[304, 611], [430, 611]]} color="#d83010" w={2} />
            <Line pts={rsiSignal} color={PURPLE} />
            <Arrows down={[[672, 614], [713, 614], [836, 609], [959, 612], [1061, 615]]} up={[[590, 620], [693, 622], [734, 620], [939, 623], [1000, 620], [1143, 624]]} />
          </Panel>
          <Panel top={633} height={71} h="h-[71px]" legend={[["MACD(7,100,3)", ORANGE], sig]} />
          <Panel
            top={704} height={45} h="h-[45px]" legend={[["MACD(12,26,9)", ORANGE], sig, ["MACD Oscillator(12,26,9)", "#c01018"]]}
            axis={[["-500", 735]]} from={723} to={747} step={2.6}
          >
            <BaseLine y={732.5} label={false} w={1} />
            {oscillator.map((y, i) => (
              <rect key={i} x={Math.round(barX(i + 33)) - 10} y={Math.min(y, 732)} width={19} height={Math.abs(y - 732)} fill={y > 732 ? AREA_BLUE : "#e01010"} />
            ))}
            <g shapeRendering="auto">
              <Line pts={macd} color={ORANGE} />
              <Line pts={macdSignal} color={PURPLE} />
            </g>
            <Arrows up={[[1041, 748]]} />
          </Panel>
          <TimeAxis />
          <ScrollRow />
        </main>
        <SideTools />
      </div>

      <div className="mb-[3px] mt-[2px] flex flex-1 pl-1">
        <InvestorPane />
        <div className="w-[2px] shrink-0 bg-[#27374e]" />
        <FlowPane />
      </div>
    </div>
  );
}
